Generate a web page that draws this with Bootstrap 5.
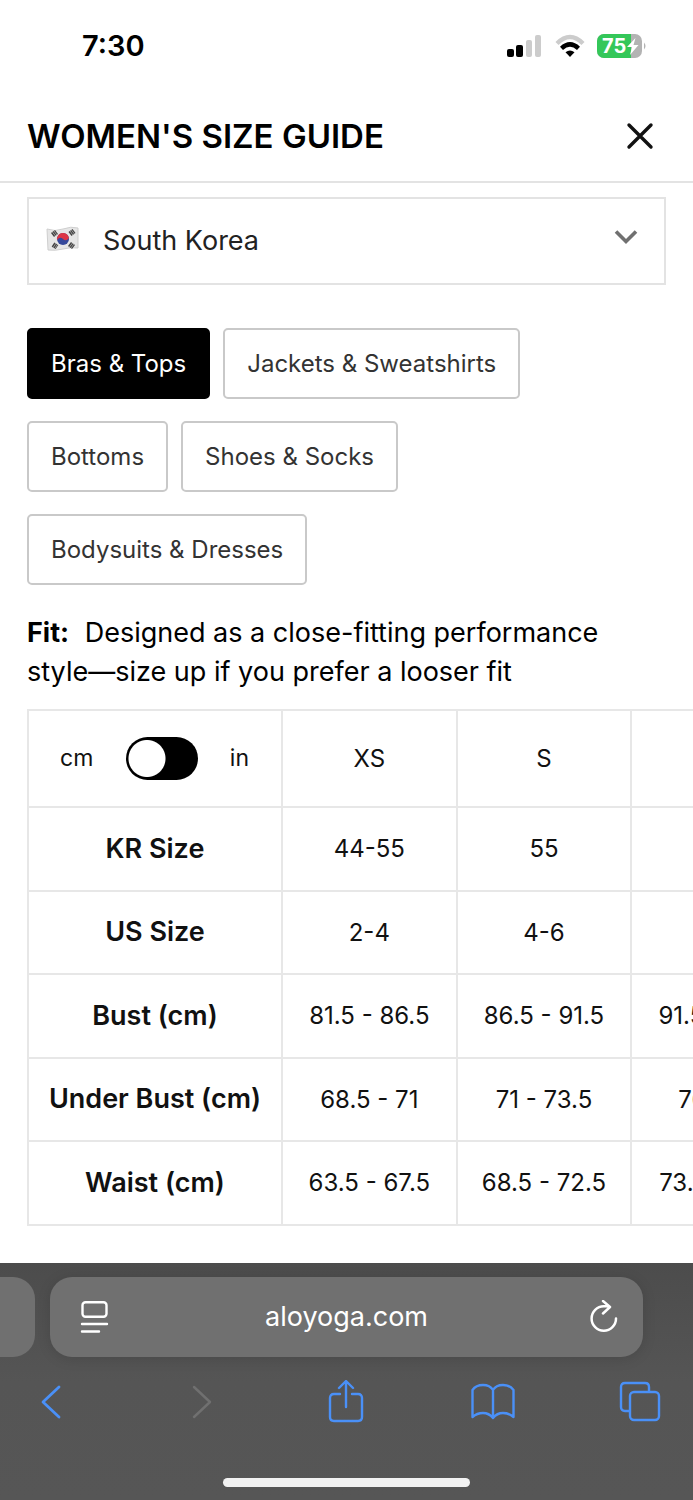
<!DOCTYPE html>
<html lang="en">
<head>
<meta charset="utf-8">
<meta name="viewport" content="width=device-width, initial-scale=1">
<title>Women's Size Guide</title>
<link href="https://cdn.jsdelivr.net/npm/bootstrap@5.3.0/dist/css/bootstrap.min.css" rel="stylesheet">
<style>
  :root { --line: #e3e3e3; --blue: #4a90f7; --gutter: 27px; }
  body { font-family: Inter, "Liberation Sans", sans-serif; font-size: 24px; color: #111; background: #fff; overflow-x: hidden; }
  svg { display: block; flex: none; }

  .status-bar { height: 92px; padding: 0 46px 0 82px; }
  .clock { font-size: 29px; line-height: 34px; font-weight: 600; color: #000; }
  .status-icons { gap: 12px; }

  .guide-header { height: 91px; padding: 0 var(--gutter) 2px; border-bottom: 2px solid var(--line); }
  .guide-title { font-size: 33px; line-height: 40px; font-weight: 600; color: #000; }
  .close-btn, .icon-btn { border: 0; padding: 0; background: none; color: inherit; }

  .guide-body { padding: 14px 0 37px var(--gutter); }
  .country-box { margin-right: var(--gutter); }
  .country-flag { position: absolute; left: 19px; top: 29px; pointer-events: none; }
  .country-select {
    height: 88px; padding: 0 70px 0 74px; font-size: 27px; color: #222;
    border: 2px solid var(--line); border-radius: 0; background-color: #fff;
    background-image: url("data:image/svg+xml,%3Csvg xmlns='http://www.w3.org/2000/svg' viewBox='0 0 24 16'%3E%3Cpath d='M2 2.5l10 10 10-10' fill='none' stroke='%23707070' stroke-width='3.6'/%3E%3C/svg%3E");
    background-size: 24px 16px; background-position: right 26px top 30px;
  }

  .category-list { margin-top: 43px; gap: 22px 13px; padding-right: var(--gutter); }
  .category-btn {
    --bs-btn-color: #333; --bs-btn-bg: #fff; --bs-btn-border-color: #c9c9c9;
    --bs-btn-hover-color: #000; --bs-btn-hover-border-color: #000;
    --bs-btn-active-color: #fff; --bs-btn-active-bg: #000; --bs-btn-active-border-color: #000;
    --bs-btn-border-width: 2px; --bs-btn-border-radius: 5px;
    --bs-btn-font-size: 24px; --bs-btn-line-height: 27px;
    --bs-btn-padding-x: 22px; --bs-btn-padding-y: 20px;
    height: 71px;
  }
  .fit-note { margin: 28px var(--gutter) 18px 0; font-size: 27px; line-height: 39px; color: #000; }
  .fit-note strong { font-weight: 700; margin-right: 8px; }

  .size-table { width: 780px; table-layout: fixed; margin: 0; border-collapse: collapse; text-align: center; color: #111; }
  .size-table th, .size-table td { border: 2px solid #e7e7e7; padding: 0; vertical-align: middle; font-size: 24px; font-weight: 400; white-space: nowrap; }
  .size-table thead tr { height: 97px; }
  .size-table tbody tr { height: 84px; }
  .size-table tbody tr:nth-child(even) { height: 83px; }
  .size-table tbody th { font-size: 27px; font-weight: 600; }
  .col-label { width: 254px; }
  .unit-toggle { padding: 0 32px 0 31px; }
  .unit-toggle label { font-size: 23px; }
  .unit-switch {
    appearance: none; width: 72px; height: 43px; margin: 0; border: 0; border-radius: 22px; background: #000 radial-gradient(circle at 21px 50%, #fff 18px, #000 19px);
  }
  .unit-switch:checked { background: #000 radial-gradient(circle at 51px 50%, #fff 18px, #000 19px); }

  .browser-bar { color: #fff; background: linear-gradient(#4c4c4c, #555 50%, #565656); height: 238px; padding-top: 14px; }
  .tab-strip { gap: 15px; padding-right: 50px; }
  .tab-peek { width: 35px; height: 80px; background: #707070; border-radius: 0 22px 22px 0; }
  .address-bar { height: 80px; padding: 0 24px 0 30px; background: #707070; border-radius: 22px; box-shadow: 0 2px 14px rgba(0,0,0,.12); }
  .address-bar a { font-size: 27px; line-height: 34px; }
  .reload-btn { padding-left: 6px; }
  .toolbar { height: 90px; padding: 0 31px 0 30px; color: var(--blue); }
  .toolbar .icon-btn { width: 44px; }
  .toolbar svg { margin: 0 auto; }
  .toolbar button:disabled { color: #707070; }
  .home-pill { width: 247px; height: 9px; margin: 31px auto 0; border-radius: 5px; background: #f2f2f2; }
</style>
</head>
<body>
<div class="d-flex flex-column min-vh-100">
  <div class="status-bar d-flex align-items-center justify-content-between">
    <time class="clock">7:30</time>
    <div class="status-icons d-flex align-items-center">
      <svg width="36" height="24" viewBox="0 0 36 24" aria-label="Signal">
        <rect x="0" y="15" width="7" height="8" rx="2"/><rect x="9" y="11" width="7" height="12" rx="2"/>
        <rect x="19" y="6" width="6" height="17" rx="2" fill="#ccc"/><rect x="28" y="1" width="6" height="22" rx="2" fill="#ccc"/>
      </svg>
      <svg width="30" height="24" viewBox="0 0 30 24" aria-label="Wi-Fi">
        <g fill="none" stroke-width="4.400"><path d="M2 9.500Q15-3.500 28 9.500" stroke="#ccc"/><path d="M6.500 14.300Q15 6.500 23.500 14.300" stroke="#000"/></g>
        <path d="M10.500 18.300Q15 14.500 19.500 18.300L15 23z"/>
      </svg>
      <svg width="50" height="26" viewBox="0 0 50 26" role="img" aria-label="Battery 75 percent">
        <defs><clipPath id="cell"><rect x="0" y="1" width="45" height="24" rx="7"/></clipPath></defs>
        <g clip-path="url(#cell)"><path d="M0 0h50v26H0z" fill="#b3b3b3"/><path d="M0 0h34v26H0z" fill="#34c759"/></g>
        <path d="M47 9.500q3 3.500 0 7z" fill="#b3b3b3"/>
        <text x="5" y="20" font-size="20" font-weight="700" fill="#fff">75</text>
        <path d="M38.500 5L30 14h5l-2 8 8.500-10h-5z" fill="#fff"/>
      </svg>
    </div>
  </div>

  <header class="guide-header d-flex align-items-center justify-content-between">
    <h1 class="guide-title m-0">WOMEN'S SIZE GUIDE</h1>
    <button type="button" class="close-btn" aria-label="Close">
      <svg width="53" height="28" viewBox="0 0 53 28"><path d="M16 3l22 22M38 3L16 25" stroke="#111" stroke-width="3.400" stroke-linecap="round"/></svg>
    </button>
  </header>

  <main class="guide-body">
    <div class="country-box position-relative">
      <select id="country" class="form-select country-select" aria-label="Country"><option>South Korea</option></select>
      <svg class="country-flag" width="34" height="26" viewBox="0 0 34 26" aria-hidden="true">
        <path d="M1 3Q9 6 17 3T32 2V22Q25 21 17 23T2 24z" fill="#e6e6e6" stroke="#cfcfcf"/>
        <circle cx="17" cy="13" r="6" fill="#35489b"/><path d="M11 14A6 6 0 0 1 23 12Q20 16 17 13T11 14z" fill="#dc3545"/>
        <g stroke="#444" stroke-width="5" stroke-dasharray="1.500 .4"><path d="M6.500 9l4-3M23.500 18l4 3M7 18.500l4 2.500M24 8l4-3"/></g>
      </svg>
    </div>

    <div class="category-list d-flex flex-wrap">
      <button type="button" class="btn category-btn active" aria-pressed="true">Bras &amp; Tops</button>
      <button type="button" class="btn category-btn">Jackets &amp; Sweatshirts</button>
      <button type="button" class="btn category-btn">Bottoms</button>
      <button type="button" class="btn category-btn">Shoes &amp; Socks</button>
      <button type="button" class="btn category-btn">Bodysuits &amp; Dresses</button>
    </div>

    <p class="fit-note"><strong>Fit:</strong> Designed as a close-fitting performance <span class="text-nowrap">style—size</span> up if you prefer a looser fit</p>

    <div class="overflow-hidden">
      <table class="size-table">
        <colgroup><col class="col-label"><col><col><col></colgroup>
        <thead>
          <tr>
            <th>
              <div class="unit-toggle d-flex align-items-center justify-content-between">
                <label for="unit">cm</label>
                <input class="unit-switch" type="checkbox" role="switch" id="unit">
                <label for="unit">in</label>
              </div>
            </th>
            <th scope="col">XS</th><th scope="col">S</th><th scope="col">M</th>
          </tr>
        </thead>
        <tbody>
          <tr><th scope="row">KR Size</th><td>44-55</td><td>55</td><td>66</td></tr>
          <tr><th scope="row">US Size</th><td>2-4</td><td>4-6</td><td>8</td></tr>
          <tr><th scope="row">Bust (cm)</th><td>81.5 - 86.5</td><td>86.5 - 91.5</td><td>91.5 - 96.5</td></tr>
          <tr><th scope="row">Under Bust (cm)</th><td>68.5 - 71</td><td>71 - 73.5</td><td>76 - 78</td></tr>
          <tr><th scope="row">Waist (cm)</th><td>63.5 - 67.5</td><td>68.5 - 72.5</td><td>73.5 - 77.5</td></tr>
        </tbody>
      </table>
    </div>
  </main>

  <footer class="browser-bar mt-auto">
    <div class="tab-strip d-flex">
      <div class="tab-peek"></div>
      <div class="address-bar d-flex flex-grow-1 align-items-center justify-content-between">
        <button type="button" class="icon-btn" aria-label="Page menu">
          <svg width="30" height="34" viewBox="0 0 30 34" fill="none" stroke="#fff" stroke-width="2.400" stroke-linecap="round"><rect x="2.500" y="2.200" width="24" height="14.600" rx="3"/><path d="M2 24h25M2 31.500h17"/></svg>
        </button>
        <a href="#" class="text-white text-decoration-none">aloyoga.com</a>
        <button type="button" class="icon-btn reload-btn" aria-label="Reload">
          <svg width="30" height="34" viewBox="0 0 30 34" fill="none" stroke="#fff" stroke-width="2.500" stroke-linecap="round" stroke-linejoin="round"><path d="M27 18.500A12.200 12.200 0 1 1 14.800 6.300H20M14 1l7 6-7 6.500"/></svg>
        </button>
      </div>
    </div>
    <nav class="toolbar d-flex align-items-center justify-content-between" aria-label="Browser">
      <button type="button" class="icon-btn" aria-label="Back"><svg width="26" height="44" viewBox="0 0 26 44" fill="none" stroke="currentColor" stroke-width="2.800" stroke-linecap="round" stroke-linejoin="round"><path d="M20 7L4 22l16 15"/></svg></button>
      <button type="button" class="icon-btn" aria-label="Forward" disabled><svg width="26" height="44" viewBox="0 0 26 44" fill="none" stroke="currentColor" stroke-width="2.400" stroke-linecap="round" stroke-linejoin="round"><path d="M8 7l16 15L8 37"/></svg></button>
      <button type="button" class="icon-btn" aria-label="Share"><svg width="36" height="44" viewBox="0 0 36 44" fill="none" stroke="currentColor" stroke-width="2.400" stroke-linecap="round" stroke-linejoin="round"><path d="M12 14H6q-4 0-4 4v19q0 4 4 4h24q4 0 4-4V18q0-4-4-4h-6M18 27V1.500M11 8l7-7 7 7"/></svg></button>
      <button type="button" class="icon-btn" aria-label="Bookmarks"><svg width="44" height="44" viewBox="0 0 44 44" fill="none" stroke="currentColor" stroke-width="2.400" stroke-linejoin="round"><path d="M22 10Q19 5 12 5T1.500 10V37Q6 33 12 33t10 5q4-5 10-5t10.500 4V10Q39 5 32 5T22 10zV38"/></svg></button>
      <button type="button" class="icon-btn" aria-label="Tabs"><svg width="42" height="44" viewBox="0 0 42 44" fill="none" stroke="currentColor" stroke-width="2.400"><rect x="11" y="12" width="29" height="28" rx="4"/><path d="M11 31H6q-4 0-4-4V7q0-4 4-4h20q4 0 4 4v5"/></svg></button>
    </nav>
    <div class="home-pill"></div>
  </footer>
</div>
<script src="https://cdn.jsdelivr.net/npm/bootstrap@5.3.0/dist/js/bootstrap.bundle.min.js"></script>
</body>
</html>
